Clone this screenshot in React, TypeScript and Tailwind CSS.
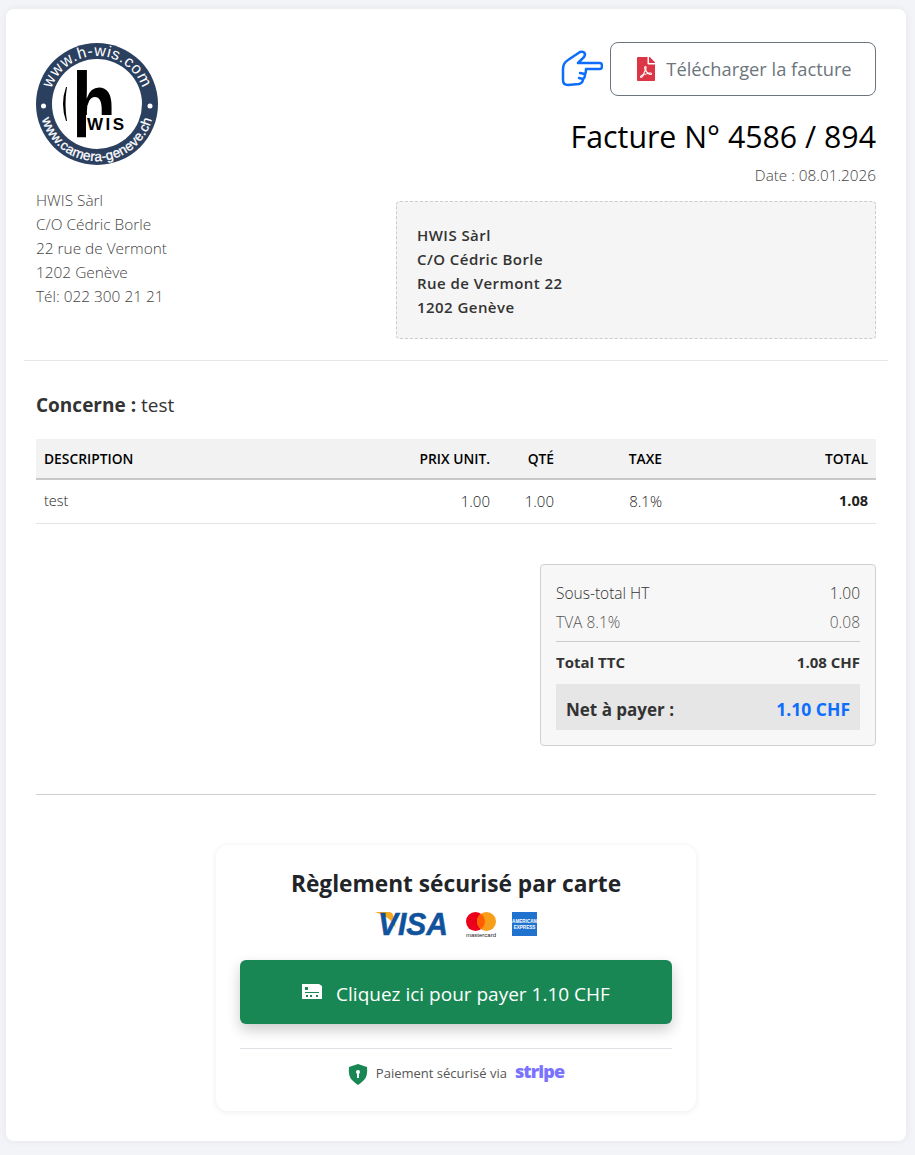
import { FaFilePdf } from 'react-icons/fa'

function CompanyLogo() {
  return (
    <svg width="122" height="124" viewBox="0 0 122 124" className="block">
      <defs>
        <path id="logo-top" d="M15.9 78.4 A48 48 0 1 1 106.1 78.4" />
        <path id="logo-bottom" d="M4.9 52.1 A57 57 0 1 0 117.1 52.1" />
      </defs>
      <circle cx="61" cy="62" r="61" fill="#2b3f5f" />
      <circle cx="61" cy="62" r="45" fill="#fff" />
      <text fill="#fff" fontSize="16" letterSpacing="0.7" fontFamily="'Liberation Sans', sans-serif">
        <textPath href="#logo-top" startOffset="50%" textAnchor="middle">www.h-wis.com</textPath>
      </text>
      <text fill="#fff" fontSize="13.5" letterSpacing="0.2" fontFamily="'Liberation Sans', sans-serif" stroke="#fff" strokeWidth="0.3">
        <textPath href="#logo-bottom" startOffset="50%" textAnchor="middle">www.camera-geneve.ch</textPath>
      </text>
      <circle cx="7.5" cy="64" r="2.5" fill="#fff" />
      <circle cx="114" cy="64" r="2.5" fill="#fff" />
      {/* left arc of the mark */}
      <path d="M30 45 Q24 62 30 79 L31 79 Q28 62 31 45 Z" fill="#000" />
      <text x="36" y="95" fontSize="92" fontWeight="700" fill="#000" fontFamily="'Liberation Sans', sans-serif" textLength="44" lengthAdjust="spacingAndGlyphs">h</text>
      <rect x="50" y="73" width="40" height="24" fill="#fff" />
      <text x="51" y="88" fontSize="17" fontWeight="700" fill="#000" fontFamily="'Liberation Sans', sans-serif" textLength="37" lengthAdjust="spacing">WIS</text>
    </svg>
  )
}

function HandIcon() {
  return (
    <svg width="42" height="38" viewBox="6 5 42 38" fill="none" stroke="#0d6efd" strokeWidth="2.5" strokeLinejoin="round" strokeLinecap="round">
      <path d="M8 24 Q8 18 13 15 L25 7 Q29 6 30 9 Q30 12 27 14 L23 18 L45 18 Q47 18 47 21 Q47 24 45 24 L31 24 Q31 28 30 29 Q30 33 28 34 Q28 38 24 39 L13 40 Q8 40 8 35 Z" />
      <path d="M25 28 L30 29 M24 33 L28 34" />
    </svg>
  )
}

function CardIcon() {
  return (
    <svg width="20" height="15" viewBox="0 0 20 15" className="shrink-0">
      <path d="M0 0 H17 L20 2 V15 H0 Z" fill="#fff" />
      <rect x="3" y="3" width="3" height="3" fill="#198754" />
      <rect x="3" y="8" width="14" height="1" fill="#198754" />
      <rect x="4" y="11" width="2" height="2" fill="#198754" />
      <rect x="8" y="11" width="2" height="2" fill="#198754" />
      <rect x="14" y="11" width="2" height="2" fill="#198754" />
    </svg>
  )
}

function ShieldIcon() {
  return (
    <svg width="20" height="21" viewBox="0 0 20 21" className="shrink-0">
      <path d="M10 0 L19 3 Q20 12 16 16 Q13 19 10 21 Q7 19 4 16 Q0 12 1 3 Z" fill="#198754" />
      <circle cx="10" cy="8" r="2" fill="#fff" />
      <rect x="9" y="9" width="2" height="5" fill="#fff" />
    </svg>
  )
}

function CardLogos() {
  return (
    <div className="flex items-center justify-center gap-[15px] h-[28px] mt-[10px]">
      <svg width="75" height="26" viewBox="0 0 75 26">
        <path d="M0 1 L14 1 Q17 1 18 4 L21 17 Q16 6 0 1 Z" fill="#f7a823" />
        <text x="3" y="24" fontSize="31" fontWeight="700" fontStyle="italic" fill="#10529c" stroke="#10529c" strokeWidth="0.5" fontFamily="'Liberation Sans', sans-serif" textLength="70" lengthAdjust="spacingAndGlyphs">VISA</text>
      </svg>
      <svg width="32" height="26" viewBox="0 0 32 26">
        <circle cx="10.5" cy="10.5" r="9.5" fill="#eb001b" />
        <circle cx="21.5" cy="10.5" r="9.5" fill="#f79e1b" />
        <path d="M16 2.8 A9.5 9.5 0 0 1 16 18.2 A9.5 9.5 0 0 1 16 2.8 Z" fill="#ff5f00" />
        <text x="16" y="25.5" fontSize="6" textAnchor="middle" fill="#222" fontFamily="'Liberation Sans', sans-serif">mastercard</text>
      </svg>
      <svg width="25" height="24" viewBox="0 0 25 24">
        <rect width="25" height="24" fill="#1f72cd" />
        <text x="12.5" y="11" fontSize="4.6" textAnchor="middle" fill="#fff" fontWeight="700" fontFamily="'Liberation Sans', sans-serif">AMERICAN</text>
        <text x="12.5" y="16.5" fontSize="4.6" textAnchor="middle" fill="#fff" fontWeight="700" fontFamily="'Liberation Sans', sans-serif">EXPRESS</text>
      </svg>
    </div>
  )
}

export default function App() {
  return (
    <div className="min-h-[1155px] bg-[#f3f4f8] pl-[6px] pr-[9px] pt-[9px] pb-[14px] text-[#212529] font-['Open_Sans','Noto_Sans',sans-serif]">
      <div className="h-[1132px] rounded-[8px] bg-white px-[18px] pt-[33px] shadow-[0_0_8px_rgba(0,0,0,0.06)]">
        {/* Header */}
        <div className="flex justify-between px-[12px] h-[319px] border-b border-[#e6e6e6] -mb-px">
          <div className="w-[300px]">
            <CompanyLogo />
            <div className="mt-[23px] text-[15.4px] leading-[24px] text-[#444] font-light">
              <div>HWIS Sàrl</div>
              <div>C/O Cédric Borle</div>
              <div>22 rue de Vermont</div>
              <div>1202 Genève</div>
              <div>Tél: 022 300 21 21</div>
            </div>
          </div>
          <div className="w-[480px] flex flex-col items-end">
            <div className="flex items-center gap-[7px]">
              <HandIcon />
              <div className="flex h-[54px] w-[266px] items-center justify-center gap-[8px] rounded-[8px] border border-[#6c757d] text-[18.3px] text-[#6c757d]">
                <FaFilePdf className="text-[#dc3545] text-[24px]" />
                <span>Télécharger la facture</span>
              </div>
            </div>
            <h1 className="mt-[18px] text-[30.3px] leading-[46px] text-black">Facture N° 4586 / 894</h1>
            <div className="mt-[5px] text-[15.3px] leading-[20px] font-light text-[#444]">Date : 08.01.2026</div>
            <div className="mt-[16px] w-[480px] h-[138px] rounded-[4px] border border-dashed border-[#ccc] bg-[#f5f5f5] px-[20px] pt-[21px] text-[15px] tracking-[0.45px] leading-[24px] font-semibold text-[#333]">
              <div>HWIS Sàrl</div>
              <div>C/O Cédric Borle</div>
              <div>Rue de Vermont 22</div>
              <div>1202 Genève</div>
            </div>
          </div>
        </div>

        <div className="px-[12px]">
          {/* Concerne */}
          <div className="mt-[32px] text-[19px] leading-[27px] text-[#333]">
            <span className="font-bold">Concerne : </span>
            <span className="font-normal">test</span>
          </div>

          {/* Lines */}
          <table className="mt-[20px] w-full table-fixed border-collapse">
            <thead>
              <tr className="h-[40px] bg-[#f2f2f2] border-b-2 border-[#c8c8c8] text-[13.8px] text-black">
                <th className="w-[362px] px-[8px] pt-[1px] text-left font-semibold">DESCRIPTION</th>
                <th className="w-[100px] px-[8px] pt-[1px] text-right font-semibold whitespace-nowrap">PRIX UNIT.</th>
                <th className="w-[64px] px-[8px] pt-[1px] text-right font-semibold">QTÉ</th>
                <th className="w-[108px] px-[8px] pt-[1px] text-right font-semibold">TAXE</th>
                <th className="w-[206px] px-[8px] pt-[1px] text-right font-semibold">TOTAL</th>
              </tr>
            </thead>
            <tbody>
              <tr className="h-[44px] border-b border-[#e3e3e3] text-[15px] font-light text-[#222]">
                <td className="px-[8px] pb-[1px] text-[14.5px]">test</td>
                <td className="px-[8px] text-right">1.00</td>
                <td className="px-[8px] text-right">1.00</td>
                <td className="px-[8px] text-right">8.1%</td>
                <td className="px-[8px] text-right font-bold text-[14.5px] text-[#222]">1.08</td>
              </tr>
            </tbody>
          </table>

          {/* Totals */}
          <div className="mt-[40px] ml-auto w-[336px] h-[182px] rounded-[4px] border border-[#d0d0d0] bg-[#f7f7f7] px-[15px] pt-[14px] text-[15.5px] text-[#333]">
            <div className="flex justify-between leading-[29px] font-light">
              <span>Sous-total HT</span>
              <span>1.00</span>
            </div>
            <div className="flex justify-between leading-[29px] font-light text-[#555]">
              <span>TVA 8.1%</span>
              <span>0.08</span>
            </div>
            <div className="mt-[4px] border-t border-[#ccc] flex justify-between pt-[10px] text-[15px] leading-[21px] font-bold text-[#333]">
              <span>Total TTC</span>
              <span>1.08 CHF</span>
            </div>
            <div className="mt-[11px] flex h-[46px] items-center justify-between bg-[#e6e6e6] px-[10px] pt-[6px] text-[17px] font-bold text-[#333]">
              <span>Net à payer :</span>
              <span className="text-[17.5px] text-[#0d6efd]">1.10 CHF</span>
            </div>
          </div>

          <div className="mt-[48px] border-t border-[#cfcfcf]" />

          {/* Payment */}
          <div className="mx-auto mt-[50px] w-[480px] h-[266px] rounded-[12px] bg-white px-[24px] pt-[22px] shadow-[0_1px_6px_rgba(0,0,0,0.08)]">
            <h2 className="text-center text-[22.7px] leading-[33px] font-bold text-[#212529]">Règlement sécurisé par carte</h2>
            <CardLogos />
            <div className="mt-[22px] flex h-[64px] items-center justify-center gap-[14px] rounded-[6px] bg-[#198754] text-[19px] text-white shadow-[0_6px_14px_rgba(0,0,0,0.2)]">
              <CardIcon />
              <span className="pt-[5px]">Cliquez ici pour payer 1.10 CHF</span>
            </div>
            <div className="mt-[24px] flex items-center justify-center gap-[8px] border-t border-[#dee2e6] pt-[10px] text-[13px] text-[#555]">
              <ShieldIcon />
              <span>Paiement sécurisé via</span>
              <span className="pb-[3px] -translate-y-[2px] text-[18px] leading-[28px] font-extrabold tracking-[-0.9px] text-[#7a73ff]">stripe</span>
            </div>
          </div>
        </div>
      </div>
    </div>
  )
}
